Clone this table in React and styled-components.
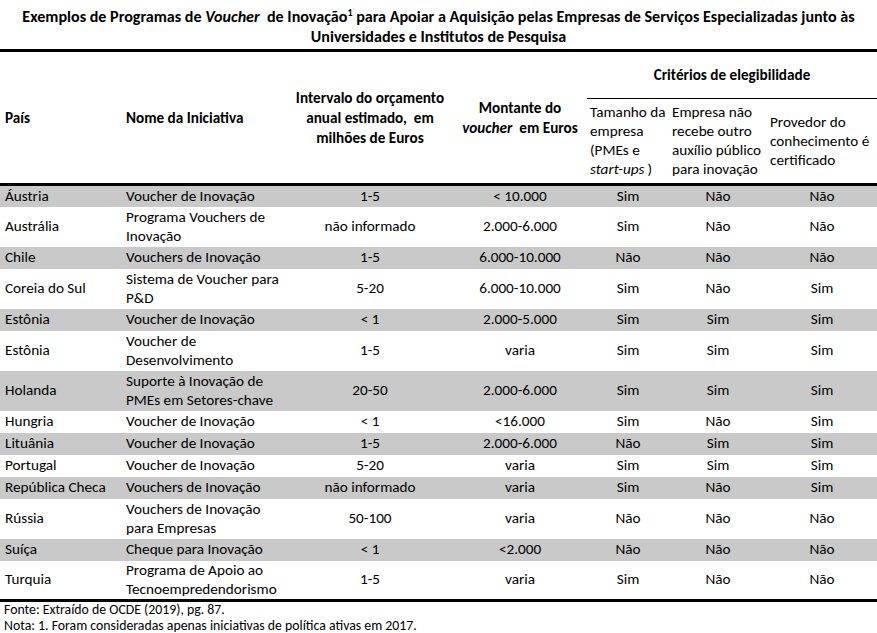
import React from 'react';
import styled, { createGlobalStyle } from 'styled-components';

const GlobalStyle = createGlobalStyle`
  body {
    margin: 0;
    background: #fff;
    color: #000;
    font-family: Carlito, Lato, "Liberation Sans", sans-serif;
  }
`;

const Page = styled.div`
  width: 877px;
`;

const Title = styled.h1`
  margin: 0;
  padding: 7px 0 2px;
  font-size: 16.1px;
  font-weight: 700;
  line-height: 20px;
  text-align: center;
  border-bottom: 3px solid #000;
  sup {
    font-size: 10px;
    line-height: 0;
    vertical-align: 6px;
  }
`;

const Table = styled.table`
  width: 877px;
  border-collapse: collapse;
  table-layout: fixed;
  font-size: 15.2px;
  line-height: 19px;
`;

const Head = styled.thead`
  border-bottom: 3px solid #000;
`;

const HeadCell = styled.th`
  font-weight: ${p => (p.$light ? 400 : 700)};
  text-align: ${p => p.$align || 'center'};
  vertical-align: middle;
  padding: 0 0 0 ${p => p.$pad || 0}px;
  height: ${p => p.$h || 'auto'};
  line-height: ${p => (p.$light ? 19 : 20)}px;
  white-space: nowrap;
`;

const GroupCell = styled(HeadCell)`
  border-bottom: 1px solid #000;
  height: 46px;
`;

const Row = styled.tr`
  height: ${p => (p.$double ? 40 : 22)}px;
  background: ${p => (p.$shade ? '#c9c9c9' : '#fff')};
`;

const Cell = styled.td`
  padding: 0 0 0 ${p => p.$pad || 0}px;
  text-align: ${p => p.$align || 'center'};
  vertical-align: middle;
  white-space: nowrap;
`;

const Body = styled.tbody`
  border-bottom: 3px solid #000;
`;

const Footer = styled.div`
  font-size: 13.8px;
  line-height: 16px;
  padding-left: 4px;
`;

const rows = [
  ['Áustria', ['Voucher de Inovação'], '1-5', '< 10.000', 'Sim', 'Não', 'Não'],
  ['Austrália', ['Programa Vouchers de', 'Inovação'], 'não informado', '2.000-6.000', 'Sim', 'Não', 'Não'],
  ['Chile', ['Vouchers de Inovação'], '1-5', '6.000-10.000', 'Não', 'Não', 'Não'],
  ['Coreia do Sul', ['Sistema de Voucher para', 'P&D'], '5-20', '6.000-10.000', 'Sim', 'Não', 'Sim'],
  ['Estônia', ['Voucher de Inovação'], '< 1', '2.000-5.000', 'Sim', 'Sim', 'Sim'],
  ['Estônia', ['Voucher de', 'Desenvolvimento'], '1-5', 'varia', 'Sim', 'Sim', 'Sim'],
  ['Holanda', ['Suporte à Inovação de', 'PMEs em Setores-chave'], '20-50', '2.000-6.000', 'Sim', 'Sim', 'Sim'],
  ['Hungria', ['Voucher de Inovação'], '< 1', '<16.000', 'Sim', 'Não', 'Sim'],
  ['Lituânia', ['Voucher de Inovação'], '1-5', '2.000-6.000', 'Não', 'Sim', 'Sim'],
  ['Portugal', ['Voucher de Inovação'], '5-20', 'varia', 'Sim', 'Sim', 'Sim'],
  ['República Checa', ['Vouchers de Inovação'], 'não informado', 'varia', 'Sim', 'Não', 'Sim'],
  ['Rússia', ['Vouchers de Inovação', 'para Empresas'], '50-100', 'varia', 'Não', 'Não', 'Não'],
  ['Suíça', ['Cheque para Inovação'], '< 1', '<2.000', 'Não', 'Não', 'Não'],
  ['Turquia', ['Programa de Apoio ao', 'Tecnoempredendorismo'], '1-5', 'varia', 'Sim', 'Não', 'Não'],
];

const Lines = ({ items }) =>
  items.map((t, i) => (
    <React.Fragment key={i}>
      {i > 0 && <br />}
      {t}
    </React.Fragment>
  ));

export default function App() {
  return (
    <Page>
      <GlobalStyle />
      <Title>
        Exemplos de Programas de <i>Voucher</i>&nbsp; de Inovação<sup>1</sup> para Apoiar a Aquisição pelas Empresas de Serviços Especializadas junto às
        <br />
        Universidades e Institutos de Pesquisa
      </Title>
      <Table>
        <colgroup>
          <col style={{ width: 122 }} />
          <col style={{ width: 165 }} />
          <col style={{ width: 166 }} />
          <col style={{ width: 134 }} />
          <col style={{ width: 82 }} />
          <col style={{ width: 98 }} />
          <col style={{ width: 110 }} />
        </colgroup>
        <Head>
          <tr>
            <HeadCell rowSpan={2} $align="left" $pad={5}>País</HeadCell>
            <HeadCell rowSpan={2} $align="left" $pad={4}>Nome da Iniciativa</HeadCell>
            <HeadCell rowSpan={2}>
              Intervalo do orçamento<br />anual estimado,&nbsp; em<br />milhões de Euros
            </HeadCell>
            <HeadCell rowSpan={2}>
              Montante do<br /><i>voucher</i>&nbsp; em Euros
            </HeadCell>
            <GroupCell colSpan={3}>Critérios de elegibilidade</GroupCell>
          </tr>
          <tr>
            <HeadCell $light $align="left" $pad={3} $h="84px">
              Tamanho da<br />empresa<br />(PMEs e<br /><i>start-ups</i>&thinsp;)
            </HeadCell>
            <HeadCell $light $align="left" $pad={3}>
              Empresa não<br />recebe outro<br />auxílio público<br />para inovação
            </HeadCell>
            <HeadCell $light $align="left" $pad={3}>
              Provedor do<br />conhecimento é<br />certificado
            </HeadCell>
          </tr>
        </Head>
        <Body>
          {rows.map((r, i) => (
            <Row key={i} $shade={i % 2 === 0} $double={r[1].length > 1}>
              <Cell $align="left" $pad={5}>{r[0]}</Cell>
              <Cell $align="left" $pad={4}><Lines items={r[1]} /></Cell>
              <Cell>{r[2]}</Cell>
              <Cell>{r[3]}</Cell>
              <Cell>{r[4]}</Cell>
              <Cell>{r[5]}</Cell>
              <Cell>{r[6]}</Cell>
            </Row>
          ))}
        </Body>
      </Table>
      <Footer>
        Fonte: Extraído de OCDE (2019), pg. 87.
        <br />
        Nota: 1. Foram consideradas apenas iniciativas de política ativas em 2017.
      </Footer>
    </Page>
  );
}
